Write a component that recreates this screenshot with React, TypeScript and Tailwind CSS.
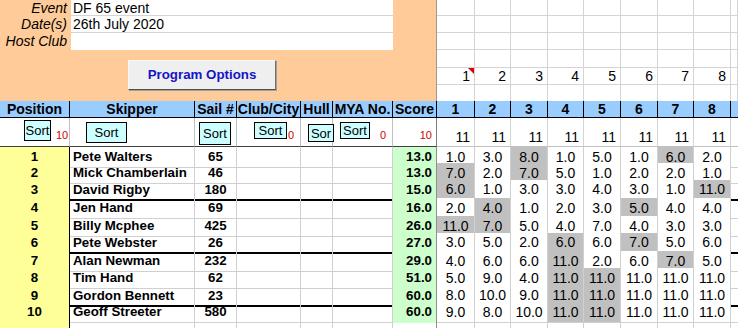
import clsx from "clsx";

const COLS =
  "grid grid-cols-[70px_125px_42px_64px_32px_60px_44px_38px_36px_37px_36px_37px_37px_36px_37px_7px]";
const RIGHT_COLS = "grid grid-cols-[38px_36px_37px_36px_37px_37px_36px_37px_7px]";

const rows = [
  { pos: 1, name: "Pete Walters", sail: "65", score: "13.0", races: ["1.0", "3.0", "8.0", "1.0", "5.0", "1.0", "6.0", "2.0"], drop: [2, 6] },
  { pos: 2, name: "Mick Chamberlain", sail: "46", score: "13.0", races: ["7.0", "2.0", "7.0", "5.0", "1.0", "2.0", "2.0", "1.0"], drop: [0, 2] },
  { pos: 3, name: "David Rigby", sail: "180", score: "15.0", races: ["6.0", "1.0", "3.0", "3.0", "4.0", "3.0", "1.0", "11.0"], drop: [0, 7] },
  { pos: 4, name: "Jen Hand", sail: "69", score: "16.0", races: ["2.0", "4.0", "1.0", "2.0", "3.0", "5.0", "4.0", "4.0"], drop: [1, 5] },
  { pos: 5, name: "Billy Mcphee", sail: "425", score: "26.0", races: ["11.0", "7.0", "5.0", "4.0", "7.0", "4.0", "3.0", "3.0"], drop: [0, 1] },
  { pos: 6, name: "Pete Webster", sail: "26", score: "27.0", races: ["3.0", "5.0", "2.0", "6.0", "6.0", "7.0", "5.0", "6.0"], drop: [3, 5] },
  { pos: 7, name: "Alan Newman", sail: "232", score: "29.0", races: ["4.0", "6.0", "6.0", "11.0", "2.0", "6.0", "7.0", "5.0"], drop: [3, 6] },
  { pos: 8, name: "Tim Hand", sail: "62", score: "51.0", races: ["5.0", "9.0", "4.0", "11.0", "11.0", "11.0", "11.0", "11.0"], drop: [3, 4] },
  { pos: 9, name: "Gordon Bennett", sail: "23", score: "60.0", races: ["8.0", "10.0", "9.0", "11.0", "11.0", "11.0", "11.0", "11.0"], drop: [3, 4] },
  { pos: 10, name: "Geoff Streeter", sail: "580", score: "60.0", races: ["9.0", "8.0", "10.0", "11.0", "11.0", "11.0", "11.0", "11.0"], drop: [3, 4] },
];

const rowHeights = ["h-[16px]", "h-[17px]", "h-[18px]", "h-[18px]", "h-[17px]", "h-[18px]", "h-[17px]", "h-[18px]", "h-[16px]", "h-[18px]"];
const topHeights = ["h-[16px]", "h-[17px]", "h-[17px]", "h-[18px]", "h-[16px]", "h-[17px]"];

const headers = ["Position", "Skipper", "Sail #", "Club/City", "Hull", "MYA No.", "Score"];

function SortBtn({ className, label = "Sort" }: { className: string; label?: string }) {
  return (
    <div className={clsx("flex items-center justify-center bg-[#ccffff] border border-black text-[13px] leading-none overflow-hidden shrink-0", className)}>
      {label}
    </div>
  );
}

export default function App() {
  return (
    <div className="w-[738px] h-[328px] overflow-hidden bg-white text-black font-['Liberation_Sans',Arial,sans-serif] text-[13px]">
      {/* top block */}
      <div className="flex h-[101px]">
        <div className="w-[437px] bg-[#ffcc99] border-r border-r-[#a09890] flex flex-col">
          {[
            ["Event", "DF 65 event"],
            ["Date(s)", "26th July 2020"],
            ["Host Club", ""],
          ].map(([label, value], i) => (
            <div key={label} className={clsx("flex", i === 0 ? "h-[16px]" : "h-[17px]")}>
              <div className="w-[71px] pr-[4px] text-right italic text-[14px] leading-[16px]">{label}</div>
              <div className={clsx("w-[322px] bg-white pl-[2px] text-[14px] leading-[16px]", i < 2 && "border-b border-b-[#d4d4d4]")}>
                {value}
              </div>
            </div>
          ))}
          <div className="pl-[128px] pt-[10px]">
            <div className="w-[148px] h-[30px] flex items-center justify-center bg-[#efefef] border border-t-[#f8f8f8] border-l-[#f8f8f8] border-r-[#707070] border-b-[#505050] shadow-[1px_1px_0_#a0a0a0] text-[#1414c8] font-bold text-[13.3px]">
              Program Options
            </div>
          </div>
        </div>
        <div className="flex-1 flex flex-col">
          {topHeights.map((h, r) => (
            <div key={r} className={clsx(RIGHT_COLS, h)}>
              {Array.from({ length: 9 }).map((_, c) => (
                <div
                  key={c}
                  className={clsx(
                    "relative flex items-end justify-end pr-[4px] text-[14px] leading-[16px] border-r border-r-[#d4d4d4]",
                    r < 5 && "border-b border-b-[#d4d4d4]"
                  )}
                >
                  {r === 4 && c < 8 ? c + 1 : ""}
                  {r === 4 && c === 0 && (
                    <span className="absolute right-0 top-0 w-0 h-0 border-t-[6px] border-t-[#e00000] border-l-[6px] border-l-transparent" />
                  )}
                </div>
              ))}
            </div>
          ))}
        </div>
      </div>

      {/* header row */}
      <div className={clsx(COLS, "h-[17px] bg-[#99ccff] font-bold text-[14px] leading-[16px]")}>
        {headers.map((h) => (
          <div key={h} className="flex items-center justify-center border-r border-b border-black">
            {h}
          </div>
        ))}
        {Array.from({ length: 8 }).map((_, i) => (
          <div key={i} className="flex items-center justify-center border-r border-b border-black font-['Liberation_Sans_Narrow','Arial_Narrow','Liberation_Sans',sans-serif]">
            {i + 1}
          </div>
        ))}
        <div className="border-b border-black" />
      </div>

      {/* sort row */}
      <div className={clsx(COLS, "h-[29px] text-[11px]")}>
        <div className="flex items-end pl-[24px] pb-[4px] gap-[5px] border-r border-r-[#c0c0c0] border-b border-b-[#404040]">
          <SortBtn className="w-[27px] h-[21px] mb-[1px]" />
          <span className="text-[#d00000] leading-none mb-[1px]">10</span>
        </div>
        <div className="flex items-start pt-[4px] pl-[16px] border-r border-r-[#c0c0c0] border-b border-b-[#404040]">
          <SortBtn className="w-[41px] h-[21px]" />
        </div>
        <div className="flex items-start pt-[4px] pl-[4px] border-r border-r-[#c0c0c0] border-b border-b-[#404040]">
          <SortBtn className="w-[32px] h-[23px]" />
        </div>
        <div className="flex items-end justify-between pl-[17px] pr-[6px] pb-[5px] border-r border-r-[#c0c0c0] border-b border-b-[#404040]">
          <SortBtn className="w-[33px] h-[17px] mb-[2px]" />
          <span className="text-[#d00000] leading-none">0</span>
        </div>
        <div className="relative flex items-start pt-[6px] pl-[7px] border-r border-r-[#c0c0c0] border-b border-b-[#404040]">
          <SortBtn className="w-[26px] h-[18px] relative z-10 -mr-[2px]" label="Sor" />
        </div>
        <div className="flex items-end justify-between pl-[7px] pr-[6px] pb-[5px] border-r border-r-[#c0c0c0] border-b border-b-[#404040]">
          <SortBtn className="w-[30px] h-[17px] mb-[2px]" />
          <span className="text-[#d00000] leading-none">0</span>
        </div>
        <div className="flex items-end justify-end pr-[4px] pb-[5px] border-r border-r-[#808080] border-b border-b-[#404040]">
          <span className="text-[#d00000] leading-none">10</span>
        </div>
        {Array.from({ length: 8 }).map((_, i) => (
          <div key={i} className="flex items-end justify-end pr-[4px] pb-[2px] text-[14px] leading-none border-r border-r-[#d4d4d4] border-b border-b-[#c0c0c0]">
            11
          </div>
        ))}
        <div className="border-b border-b-[#c0c0c0]" />
      </div>

      {/* results */}
      {rows.map((r, idx) => {
        const thick = idx === 2 || idx === 5 || idx === 8;
        const bottom = thick ? "border-b-2 border-b-black" : "border-b border-b-[#d0d0d0]";
        const cell = "flex items-center border-r border-r-[#d0d0d0] leading-none";
        return (
          <div key={r.pos} className={clsx(COLS, rowHeights[idx], "text-[13.3px]")}>
            <div className="flex items-center justify-center bg-[#ffff99] font-bold border-r border-r-black border-b border-b-[#c8c8c8]">
              {r.pos}
            </div>
            <div className={clsx(cell, bottom, "pl-[3px] font-bold whitespace-nowrap")}>{r.name}</div>
            <div className={clsx(cell, bottom, "justify-center font-bold")}>{r.sail}</div>
            <div className={clsx(cell, bottom)} />
            <div className={clsx(cell, bottom)} />
            <div className={clsx(cell, bottom)} />
            <div className="flex items-center justify-end pr-[4px] bg-[#ccffcc] font-bold border-r border-r-[#909090] border-b border-b-[#ccffcc]">
              {r.score}
            </div>
            {r.races.map((v, i) => (
              <div
                key={i}
                className={clsx(cell, bottom, "justify-center text-[14px]", r.drop.includes(i) ? "bg-[#c0c0c0]" : "bg-white")}
              >
                {v}
              </div>
            ))}
            <div className={clsx(bottom)} />
          </div>
        );
      })}

      {/* trailing empty row */}
      <div className={clsx(COLS, "h-[17px]")}>
        <div className="bg-[#ffff99] border-r border-r-black" />
        {Array.from({ length: 15 }).map((_, i) => (
          <div key={i} className={clsx(i < 14 && "border-r", i === 5 ? "border-r-[#909090]" : "border-r-[#d0d0d0]")} />
        ))}
      </div>
    </div>
  );
}
